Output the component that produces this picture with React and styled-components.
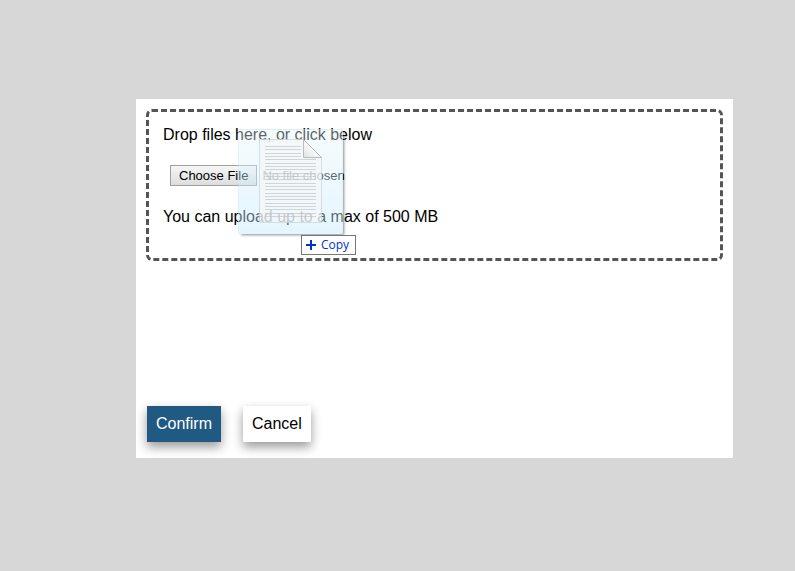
import React from "react";
import styled, { createGlobalStyle } from "styled-components";

const GlobalStyle = createGlobalStyle`
  * { box-sizing: border-box; }
  body {
    margin: 0;
    background: #d7d7d7;
    color: #000;
    font: 16px/18px "Liberation Sans", Arial, sans-serif;
  }
`;

const Page = styled.main`
  display: flex;
  min-height: 100vh;
  padding: 99px 62px 113px 136px;
`;

const Dialog = styled.section`
  display: flex;
  flex: 1;
  flex-direction: column;
  justify-content: space-between;
  padding: 10px 10px 16px;
  background: #fff;
`;

const DropZone = styled.div`
  position: relative;
  display: flex;
  flex-direction: column;
  align-items: flex-start;
  gap: 22px;
  padding: 14px 14px 32px;
  border: 3px dashed #555;
  border-radius: 6px;
`;

const Text = styled.p`
  margin: 0;
`;

const PickerLabel = styled.label`
  display: flex;
  flex-direction: column;
  gap: 21px;
`;

const FileInput = styled.input`
  width: 250px;
  height: 21px;
  margin-left: 7px;
  color: #000;
  font: 13px/15px "Liberation Sans", Arial, sans-serif;

  &::file-selector-button {
    height: 21px;
    margin: 0 5px 0 0;
    padding: 1px 8px;
    border: 1px solid #a0a0a0;
    border-radius: 0;
    background: linear-gradient(#f6f6f6, #dddddd);
    color: #000;
    font: inherit;
  }
`;

const DragGhost = styled.div`
  position: absolute;
  top: 17px;
  left: 89px;
  width: 105px;
  height: 105px;
  padding: 9px 0 0 20px;
  border: 1px solid rgba(190, 225, 240, 0.3);
  border-radius: 2px;
  background: linear-gradient(rgba(232, 246, 254, 0.4), rgba(196, 234, 252, 0.45));
  box-shadow: 2px 2px 3px -1px rgba(0, 0, 0, 0.45);
  pointer-events: none;
`;

const DropHint = styled.div`
  position: absolute;
  top: 123px;
  left: 152px;
  display: flex;
  align-items: center;
  gap: 4px;
  height: 20px;
  padding: 0 6px 0 4px;
  border: 1px solid #767676;
  background: #fff;
  color: #0033cc;
  font: 12px/18px "Open Sans", "Noto Sans", sans-serif;
  pointer-events: none;
`;

const Actions = styled.div`
  display: flex;
  gap: 22px;
  padding-left: 1px;
`;

const Button = styled.button`
  height: 36px;
  padding: 0 9px;
  border: 0;
  background: ${({ $primary }) => ($primary ? "#205981" : "#fff")};
  color: ${({ $primary }) => ($primary ? "#fff" : "#000")};
  box-shadow: 0 5px 10px rgba(0, 0, 0, 0.4);
  font: inherit;
`;

const ruleRows = Array.from({ length: 22 }, (_, i) => 8 + Math.round((i * 10) / 3));

function DocumentIcon() {
  return (
    <svg width="64" height="85" viewBox="0 0 64 85" aria-hidden="true">
      <defs>
        <linearGradient id="fold" x1="0" y1="1" x2="1" y2="0">
          <stop offset="0" stopColor="#dfe1e3" />
          <stop offset=".5" stopColor="#fafafa" />
        </linearGradient>
      </defs>
      <path d="M.5.5h44l18 18v65H.5z" fill="#f5f6f7" fillOpacity=".68" stroke="#c4cdd1" strokeOpacity=".6" />
      {ruleRows.map((y) => (
        <path key={y} d={`M6 ${y - 0.5}H${y < 20 ? 42 : 57}`} stroke="#bcc3c6" strokeOpacity=".65" />
      ))}
      <path d="M44.5.5v18h18z" fill="url(#fold)" stroke="#a9b0b4" strokeOpacity=".8" />
    </svg>
  );
}

function PlusIcon() {
  return (
    <svg width="11" height="10" viewBox="0 0 11 10" aria-hidden="true">
      <path d="M0 5h10M5 0v10" stroke="#0033cc" strokeWidth="2" />
    </svg>
  );
}

export default function App() {
  return (
    <>
      <GlobalStyle />
      <Page>
        <Dialog>
          <DropZone>
            <PickerLabel>
              <Text as="span">Drop files here, or click below</Text>
              <FileInput type="file" />
            </PickerLabel>
            <Text>You can upload up to a max of 500 MB</Text>
            <DragGhost>
              <DocumentIcon />
            </DragGhost>
            <DropHint>
              <PlusIcon />
              <span>Copy</span>
            </DropHint>
          </DropZone>
          <Actions>
            <Button type="button" $primary>Confirm</Button>
            <Button type="button">Cancel</Button>
          </Actions>
        </Dialog>
      </Page>
    </>
  );
}
